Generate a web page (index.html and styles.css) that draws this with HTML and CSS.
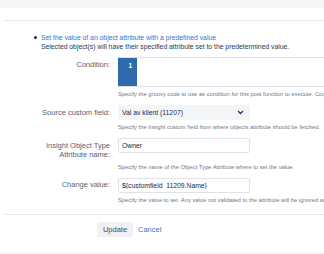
FILE: index.html
```html
<!DOCTYPE html>
<html lang="en">
<head>
  <meta charset="UTF-8" />
  <title>Post Function</title>
  <link rel="stylesheet" href="styles.css">
</head>
<body>
  <div class="top-band"></div>

  <div class="panel">
    <div class="panel-header"></div>

    <div class="intro">
      <span class="bullet"></span>
      <div>
        <a href="#" class="intro-link">Set the value of an object attribute with a predefined value</a>
        <div class="intro-desc">Selected object(s) will have their specified attribute set to the predetermined value.</div>
      </div>
    </div>

    <div class="field-group">
      <label class="field-label">Condition:</label>
      <div class="editor">
        <div class="gutter">1</div>
        <div class="code"></div>
      </div>
      <div class="help">Specify the groovy code to use as condition for this post function to execute. Condition is optional.</div>
    </div>

    <div class="field-group">
      <label class="field-label">Source custom field:</label>
      <div class="select">
        <span>Val av klient (11207)</span>
        <svg class="chevron" width="7" height="5" viewBox="0 0 7 5">
          <path d="M1 1 L3.5 3.5 L6 1" fill="none" stroke="#253858" stroke-width="1.4"/>
        </svg>
      </div>
      <div class="help">Specify the Insight custom field from where objects attribute should be fetched.</div>
    </div>

    <div class="field-group">
      <label class="field-label">Insight Object Type<br>Attribute name:</label>
      <input class="text-input" type="text" value="Owner">
      <div class="help">Specify the name of the Object Type Attribute where to set the value.</div>
    </div>

    <div class="field-group">
      <label class="field-label">Change value:</label>
      <input class="text-input" type="text" value="${customfield_11209.Name}">
      <div class="help">Specify the value to set. Any value not validated to the attribute will be ignored and not set.</div>
    </div>

    <div class="buttons">
      <button class="btn">Update</button>
      <a href="#" class="cancel">Cancel</a>
    </div>
  </div>

  <div class="bottom-band"></div>
</body>
</html>
```

FILE: styles.css
```css
* {
  box-sizing: border-box;
}

body {
  margin: 0;
  width: 324px;
  height: 254px;
  overflow: hidden;
  background-color: #ffffff;
  font-family: 'Liberation Sans', Arial, sans-serif;
  color: #172b4d;
  font-size: 6.8px;
}

.top-band {
  height: 8px;
  background-color: #f4f5f7;
}

.panel {
  margin-left: 4px;
  width: 700px;
}

.panel-header {
  height: 13px;
  border-bottom: 1px solid #e4e6ea;
}

.intro {
  display: flex;
  align-items: flex-start;
  padding: 12px 0 0 30px;
  line-height: 9px;
}

.bullet {
  width: 3px;
  height: 3px;
  border-radius: 50%;
  background-color: #172b4d;
  margin: 3px 4px 0 0;
  flex-shrink: 0;
}

.intro-link {
  color: #3b73c5;
  text-decoration: none;
}

.intro-desc {
  white-space: nowrap;
  color: #253858;
}

.field-group {
  display: grid;
  grid-template-columns: 106px 1fr;
  column-gap: 8px;
  margin-top: 6px;
}

.field-group:first-of-type {
  margin-top: 4px;
}

.field-label {
  grid-column: 1;
  grid-row: 1;
  text-align: right;
  color: #505f79;
  font-size: 7.5px;
  line-height: 9.5px;
  padding-top: 2.5px;
}

.editor {
  grid-column: 2;
  display: flex;
  width: 520px;
  height: 30px;
  border: 1px solid #dfe1e6;
  border-left: none;
}

.gutter {
  width: 19px;
  background-color: #2f6aad;
  color: #ffffff;
  font-size: 6.5px;
  font-weight: bold;
  text-align: right;
  padding: 4px 5px 0 0;
}

.code {
  flex: 1;
}

.select {
  grid-column: 2;
  width: 132px;
  height: 15px;
  background-color: #f4f5f7;
  border-radius: 2px;
  display: flex;
  align-items: center;
  justify-content: space-between;
  padding: 0 6px 0 4px;
  font-size: 6.8px;
}

.text-input {
  grid-column: 2;
  grid-row: 1;
  width: 132px;
  height: 15px;
  border: 1px solid #dfe1e6;
  border-radius: 2px;
  padding: 0 3px;
  font-family: 'Liberation Sans', Arial, sans-serif;
  font-size: 6.8px;
  color: #172b4d;
  background-color: #ffffff;
}

.help {
  grid-column: 2;
  font-size: 5.8px;
  line-height: 9px;
  color: #6b778c;
  margin-top: 3px;
  white-space: nowrap;
}

.buttons {
  margin-top: 9px;
  border-top: 1px solid #e4e6ea;
  padding: 7px 0 0 93px;
  display: flex;
  align-items: center;
  gap: 5px;
}

.btn {
  height: 15px;
  width: 36px;
  padding: 0;
  border: none;
  border-radius: 2px;
  background-color: #f0f1f4;
  color: #42526e;
  font-family: 'Liberation Sans', Arial, sans-serif;
  font-size: 7.5px;
  cursor: pointer;
}

.cancel {
  color: #3b73c5;
  text-decoration: none;
  font-size: 7.5px;
}

.bottom-band {
  position: absolute;
  left: 0;
  top: 252px;
  width: 324px;
  height: 2px;
  background-color: #f4f5f7;
}
```
